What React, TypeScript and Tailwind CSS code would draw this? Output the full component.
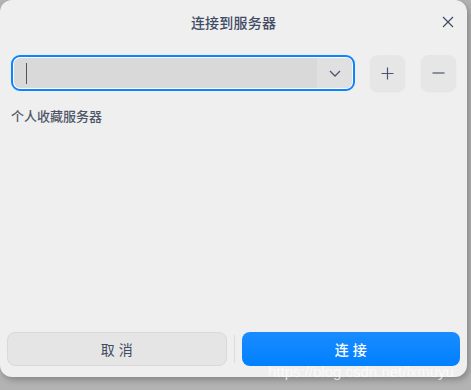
import React from "react";

const font = { fontFamily: '"Noto Sans CJK SC", "Noto Sans", sans-serif' };

function CloseIcon() {
  return (
    <svg width="12" height="12" viewBox="0 0 12 12" fill="none">
      <path d="M1 1L11 11M11 1L1 11" stroke="#3d4660" strokeWidth="1.1" />
    </svg>
  );
}

function Chevron() {
  return (
    <svg width="12" height="7" viewBox="0 0 12 7" fill="none">
      <path d="M1 1L6 6L11 1" stroke="#4b5470" strokeWidth="1.3" />
    </svg>
  );
}

export default function App() {
  return (
    <div className="w-[471px] h-[390px] bg-[#b3b3b3] overflow-hidden" style={font}>
      <div className="w-[467px] h-[377px] bg-[#efefef] rounded-[12px] flex flex-col relative shadow-[2px_3px_6px_rgba(0,0,0,0.25)]">
        {/* header */}
        <div className="h-[44px] flex items-center justify-center relative">
          <span className="text-[14px] font-medium text-[#414b64] tracking-[0.2px]">连接到服务器</span>
          <button className="absolute right-[13px] top-[16px] w-[12px] h-[12px] flex items-center justify-center">
            <CloseIcon />
          </button>
        </div>

        {/* address row */}
        <div className="flex items-center px-[11px] mt-[11px]">
          <div className="w-[345px] h-[36px] rounded-[9px] border-2 border-[#0a84ff] p-[1px] bg-white">
            <div className="h-full w-full rounded-[6px] bg-[#d9d9d9] flex items-center">
              <div className="flex-1 h-full flex items-center pl-[12px]">
                <div className="w-[1px] h-[21px] bg-[#555]" />
              </div>
              <div className="w-[35px] h-full bg-[#e0e0e0] rounded-r-[6px] flex items-center justify-center">
                <Chevron />
              </div>
            </div>
          </div>
          <button className="ml-[15px] w-[35px] h-[36px] rounded-[8px] bg-[#e6e6e6] shadow-[0_1px_2px_rgba(0,0,0,0.06)] flex items-center justify-center">
            <svg width="13" height="13" viewBox="0 0 13 13" fill="none">
              <path d="M6.5 0.5V12.5M0.5 6.5H12.5" stroke="#4b5470" strokeWidth="1.2" />
            </svg>
          </button>
          <button className="ml-[16px] w-[35px] h-[36px] rounded-[8px] bg-[#e6e6e6] shadow-[0_1px_2px_rgba(0,0,0,0.06)] flex items-center justify-center">
            <svg width="13" height="2" viewBox="0 0 13 2" fill="none">
              <path d="M0.5 1H12.5" stroke="#4b5470" strokeWidth="1.2" />
            </svg>
          </button>
        </div>

        <div className="px-[11px] mt-[15px] text-[13px] font-medium text-[#505769]">个人收藏服务器</div>

        <div className="flex-1" />

        {/* footer */}
        <div className="flex items-center px-[7px] pb-[11px]">
          <button className="w-[220px] h-[34px] rounded-[8px] bg-[#e5e5e5] border border-[#d9d9d9] text-[14px] text-[#414b64] tracking-[4px] pl-[4px]">
            取消
          </button>
          <div className="w-[1px] h-[28px] bg-[#dcdcdc] mx-[7px]" />
          <button className="w-[219px] h-[34px] rounded-[8px] bg-[linear-gradient(180deg,#1a8cff,#0080ff)] text-[14px] text-white font-medium tracking-[4px] pl-[4px]">
            连接
          </button>
        </div>

        <div
          className="absolute left-[268px] top-[364px] text-[15px] text-white/70 leading-none"
          style={{ fontFamily: '"Liberation Sans", Arial, sans-serif' }}
        >
          https://blog.csdn.net/lxmuyu
        </div>
      </div>
    </div>
  );
}
